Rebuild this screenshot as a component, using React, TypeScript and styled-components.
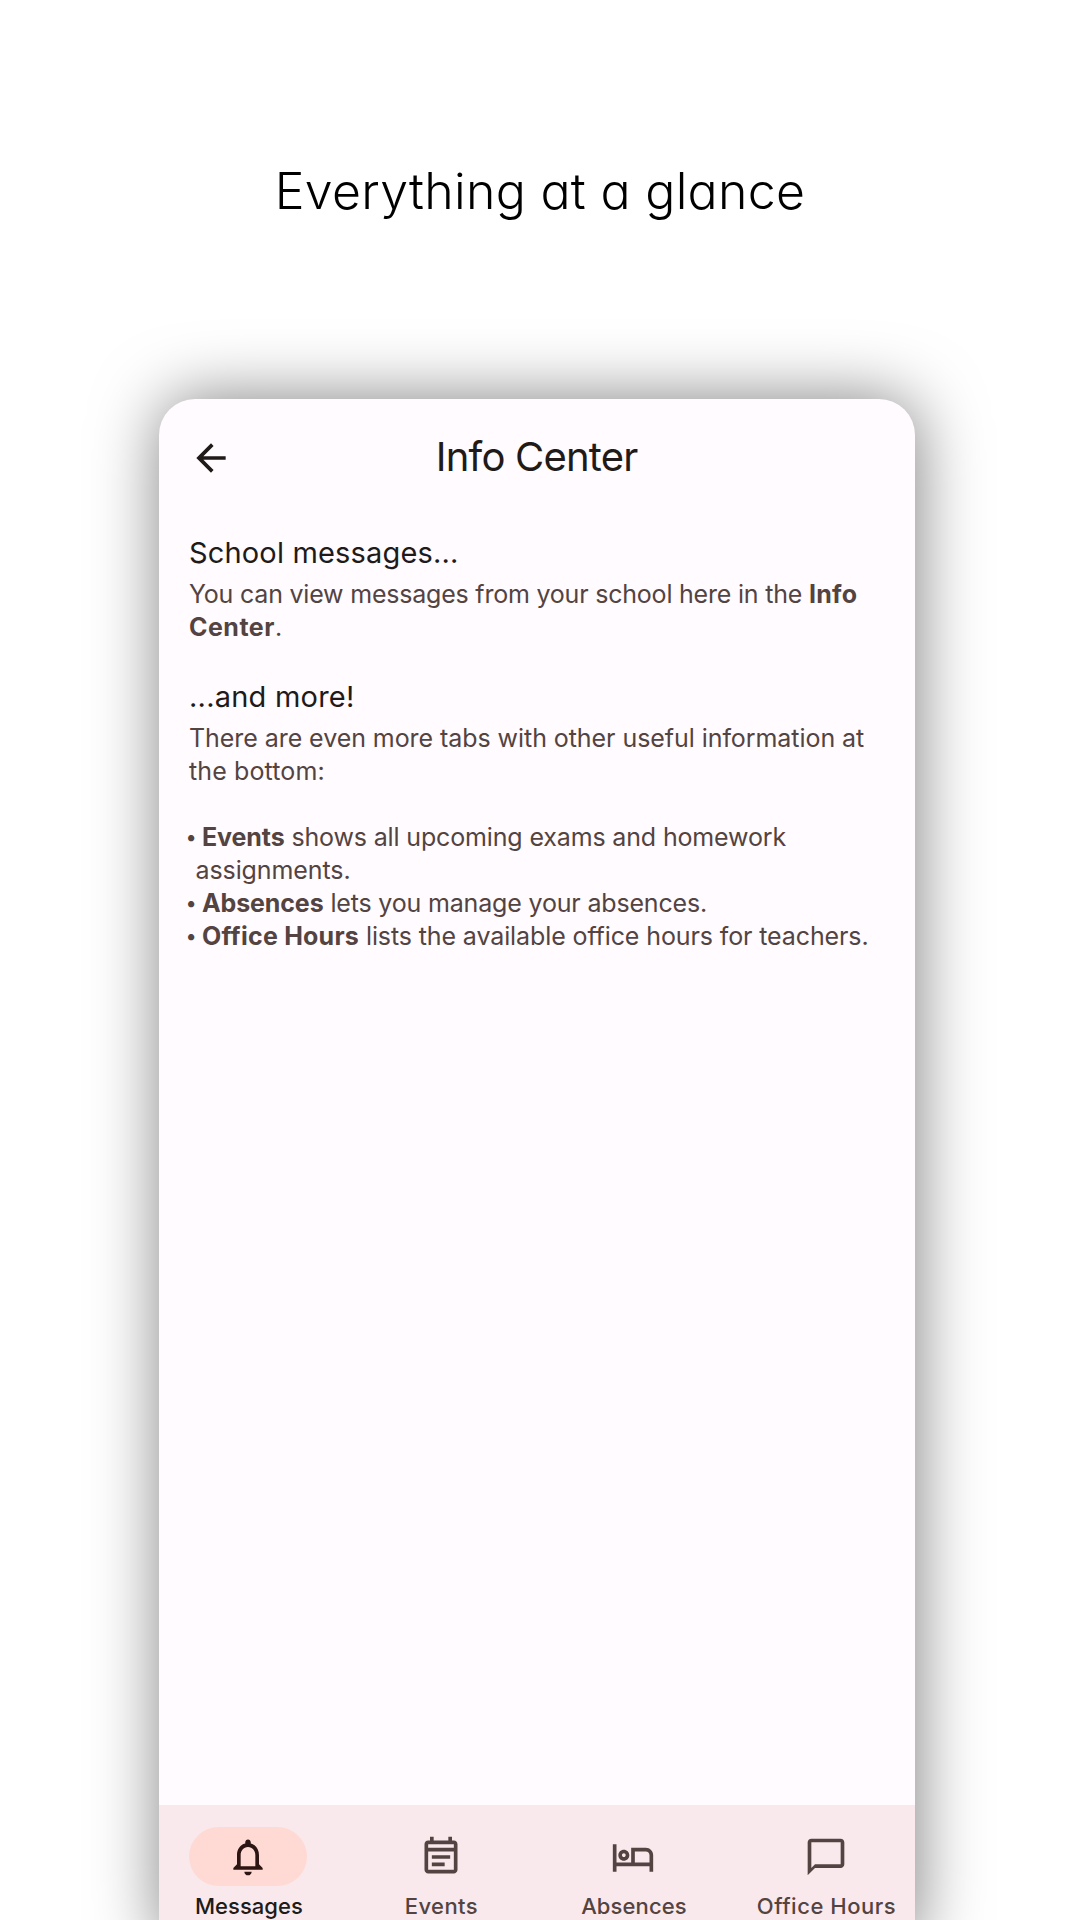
import React from "react";
import styled, { createGlobalStyle } from "styled-components";

const GlobalStyle = createGlobalStyle`
  *, *::before, *::after { box-sizing: border-box; }
  body { margin: 0; background: #ffffff; }
`;

const Page = styled.div`
  display: flex;
  flex-direction: column;
  width: 1080px;
  height: 1920px;
  overflow: hidden;
  background: #ffffff;
  font-family: Inter, "Open Sans", sans-serif;
  font-kerning: normal;
`;

const Hero = styled.header`
  flex: none;
  display: flex;
  justify-content: center;
  height: 399px;
  padding-top: 156px;
`;

const Tagline = styled.h1`
  margin: 0;
  font-size: 50px;
  font-weight: 300;
  line-height: 70px;
  letter-spacing: 0.3px;
  font-feature-settings: "cv11";
  color: #000000;
  white-space: nowrap;
`;

const Phone = styled.main`
  flex: none;
  display: flex;
  flex-direction: column;
  width: 755.6px;
  height: 1553px;
  margin-left: 159.4px;
  border-radius: 36px;
  background: #fffbff;
  box-shadow: 2px 0 67px rgba(0, 0, 0, 0.5);
  overflow: hidden;
`;

const TopBar = styled.div`
  flex: none;
  display: grid;
  grid-template-columns: 44px 1fr 44px;
  align-items: center;
  height: 118px;
  padding: 0 30px;
`;

const BackButton = styled.button`
  display: flex;
  padding: 0;
  border: 0;
  background: none;
  color: #201a19;
`;

const ScreenTitle = styled.h2`
  margin: 0;
  padding: 0 1px 2px 0;
  text-align: center;
  font-size: 40px;
  font-weight: 400;
  line-height: 52px;
  letter-spacing: -0.8px;
  color: #201a19;
`;

const Content = styled.section`
  flex: 1;
  padding: 14px 29px 0 29.6px;
`;

const Block = styled.div`
  margin-bottom: 31px;
`;

const Heading = styled.h3<{ $track: number }>`
  margin: 0 0 3px;
  font-size: 29px;
  font-weight: 400;
  line-height: 44px;
  letter-spacing: ${(p) => p.$track}px;
  color: #201a19;
`;

const Line = styled.div<{ $track?: number; $indent?: number }>`
  padding-left: ${(p) => p.$indent ?? 0}px;
  font-size: 25px;
  line-height: 33px;
  letter-spacing: ${(p) => p.$track ?? 0}px;
  white-space: nowrap;
  color: #534341;
`;

const Strong = styled.strong<{ $track?: number }>`
  font-weight: 700;
  letter-spacing: ${(p) => p.$track ?? 0}px;
`;

const List = styled.div`
  margin-top: 32.5px;
`;

const Bullet = styled.span`
  display: inline-block;
  width: 16.5px;
  margin-left: -3.5px;
  font-size: 20px;
  line-height: 20px;
  vertical-align: 2px;
`;

const NavBar = styled.nav`
  flex: none;
  display: grid;
  grid-template-columns: repeat(4, 178px);
  justify-content: space-between;
  height: 147px;
  padding-top: 22px;
  background: #f9e9ec;
`;

const NavItem = styled.div<{ $active?: boolean }>`
  display: flex;
  flex-direction: column;
  align-items: center;
  gap: 5px;
  color: ${(p) => (p.$active ? "#201a19" : "#534341")};
`;

const Pill = styled.span<{ $active?: boolean }>`
  display: flex;
  align-items: center;
  justify-content: center;
  width: 118px;
  height: 59px;
  border-radius: 30px;
  background: ${(p) => (p.$active ? "#ffdad4" : "transparent")};
  color: ${(p) => (p.$active ? "#2c1512" : "#534341")};
`;

const Label = styled.span<{ $track: number }>`
  padding-left: 1px;
  font-size: 22px;
  font-weight: 500;
  line-height: 30px;
  letter-spacing: ${(p) => p.$track}px;
  white-space: nowrap;
`;

const Icon = ({ d }: { d: string }) => (
  <svg width="44" height="44" viewBox="0 0 24 24" fill="currentColor" aria-hidden="true">
    <path d={d} />
  </svg>
);

const icons = {
  back: "M20 11H7.83l5.59-5.59L12 4l-8 8 8 8 1.41-1.41L7.83 13H20v-2z",
  bell: "M12 22c1.1 0 2-.9 2-2h-4c0 1.1.9 2 2 2zm6-6v-5c0-3.07-1.63-5.64-4.5-6.32V4c0-.83-.67-1.5-1.5-1.5s-1.5.67-1.5 1.5v.68C7.64 5.36 6 7.92 6 11v5l-2 2v1h16v-1l-2-2zm-2 1H8v-6c0-2.48 1.51-4.5 4-4.5s4 2.02 4 4.5v6z",
  event:
    "M19 3h-1V1h-2v2H8V1H6v2H5c-1.1 0-2 .9-2 2v14c0 1.1.9 2 2 2h14c1.1 0 2-.9 2-2V5c0-1.1-.9-2-2-2zm0 16H5V9h14v10zm0-12H5V5h14v2zM7 11h10v2H7zM7 15h7v2H7z",
  bed: "M7 14c1.66 0 3-1.34 3-3S8.66 8 7 8s-3 1.34-3 3 1.34 3 3 3zm0-4c.55 0 1 .45 1 1s-.45 1-1 1-1-.45-1-1 .45-1 1-1zm12-3h-8v8H3V5H1v15h2v-3h18v3h2v-9c0-2.21-1.79-4-4-4zm2 8h-8V9h6c1.1 0 2 .9 2 2v4z",
  chat: "M20 2H4c-1.1 0-2 .9-2 2v18l4-4h14c1.1 0 2-.9 2-2V4c0-1.1-.9-2-2-2zm0 14H6l-2 2V4h16v12z",
};

const tabs = [
  { label: "Messages", icon: icons.bell, track: 0.05, active: true },
  { label: "Events", icon: icons.event, track: 0.4 },
  { label: "Absences", icon: icons.bed, track: 0.12 },
  { label: "Office Hours", icon: icons.chat, track: 0.53 },
];

export default function App() {
  return (
    <Page>
      <GlobalStyle />
      <Hero>
        <Tagline>Everything at a glance</Tagline>
      </Hero>
      <Phone>
        <TopBar>
          <BackButton aria-label="Back">
            <Icon d={icons.back} />
          </BackButton>
          <ScreenTitle>Info Center</ScreenTitle>
        </TopBar>
        <Content>
          <Block>
            <Heading $track={0.17}>School messages...</Heading>
            <Line $track={-0.21}>
              You can view messages from your school here in the <Strong $track={0.25}>Info</Strong>
            </Line>
            <Line>
              <Strong $track={0.5}>Center</Strong>.
            </Line>
          </Block>
          <Block>
            <Heading $track={0.22}>...and more!</Heading>
            <Line $track={-0.06}>There are even more tabs with other useful information at</Line>
            <Line $track={0.12}>the bottom:</Line>
            <List>
              <Line $track={-0.15}>
                <Bullet>•</Bullet>
                <Strong $track={-0.1}>Events</Strong> shows all upcoming exams and homework
              </Line>
              <Line $track={-0.09} $indent={6.5}>
                assignments.
              </Line>
              <Line $track={-0.17}>
                <Bullet>•</Bullet>
                <Strong $track={-0.12}>Absences</Strong> lets you manage your absences.
              </Line>
              <Line $track={-0.11}>
                <Bullet>•</Bullet>
                <Strong $track={0.22}>Office Hours</Strong> lists the available office hours for teachers.
              </Line>
            </List>
          </Block>
        </Content>
        <NavBar>
          {tabs.map((tab) => (
            <NavItem key={tab.label} $active={tab.active}>
              <Pill $active={tab.active}>
                <Icon d={tab.icon} />
              </Pill>
              <Label $track={tab.track}>{tab.label}</Label>
            </NavItem>
          ))}
        </NavBar>
      </Phone>
    </Page>
  );
}
